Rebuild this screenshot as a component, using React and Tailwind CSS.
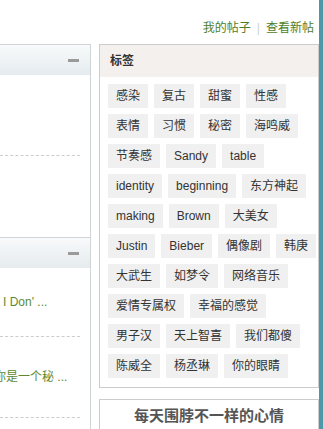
import React from 'react';

const font = { fontFamily: 'Tahoma, "Liberation Sans", "Noto Sans CJK SC", sans-serif' };

const tags = [
  '感染', '复古', '甜蜜', '性感',
  '表情', '习惯', '秘密', '海鸣威',
  '节奏感', 'Sandy', 'table',
  'identity', 'beginning', '东方神起',
  'making', 'Brown', '大美女',
  'Justin', 'Bieber', '偶像剧', '韩庚',
  '大武生', '如梦令', '网络音乐',
  '爱情专属权', '幸福的感觉',
  '男子汉', '天上智喜', '我们都傻',
  '陈威全', '杨丞琳', '你的眼睛',
];

const PanelHead = () => (
  <div className="h-[30px] bg-gradient-to-b from-[#f8fafb] to-[#e5ebee] flex items-center justify-end pr-[11px]">
    <span className="block w-[11px] h-[3px] bg-[#9a9a9a]"></span>
  </div>
);

export default function App() {
  return (
    <div className="w-[323px] h-[429px] bg-white overflow-hidden flex text-[12px]" style={font}>
      <div className="flex-1 flex flex-col">
        {/* top links */}
        <div className="h-[44px] shrink-0 flex items-start justify-end pt-[21px] pr-[5px] text-[#4e7d28] leading-[14px]">
          <span>我的帖子</span>
          <span className="mx-[6px] text-[#d0d0d0]">|</span>
          <span>查看新帖</span>
        </div>

        <div className="flex items-start shrink-0">
          {/* left column, cut off */}
          <div className="w-[91px] shrink-0 overflow-hidden">
            <div className="border-t border-r border-[#cfd4d6]">
              <PanelHead />
              <div className="h-[81px] border-b border-dashed border-[#cccccc] mr-[10px]"></div>
              <div className="h-[81px]"></div>
            </div>
            <div className="border-t border-r border-[#cfd4d6]">
              <PanelHead />
              <div className="h-[69px] border-b border-dashed border-[#cccccc] mr-[10px] flex items-center pl-[3px] text-[#5b8a34] whitespace-nowrap">
                I Don' ...
              </div>
              <div className="h-[81px] border-b border-dashed border-[#cccccc] mr-[10px] flex items-center text-[#5b8a34] whitespace-nowrap">
                <span className="ml-[-6px]">你是一个秘 ...</span>
              </div>
              <div className="h-[20px]"></div>
            </div>
          </div>

          {/* right column */}
          <div className="ml-[8px] w-[220px] shrink-0 flex flex-col">
            <div className="border border-[#cccccc]">
              <div className="h-[32px] bg-[#f3f0ee] flex items-center pl-[10px] font-bold text-[#333333]">标签</div>
              <div className="flex flex-wrap gap-[6px] pl-[8px] pt-[7px] pb-[9px]">
                {tags.map((t) => (
                  <span key={t} className="h-[24px] leading-[24px] px-[8px] bg-[#f0f0f0] text-[#333333] whitespace-nowrap">
                    {t}
                  </span>
                ))}
              </div>
            </div>
            <div className="mt-[11px] border border-[#cccccc] h-[40px] flex justify-center pt-[7px]">
              <span className="text-[15px] font-bold text-[#555555] leading-[18px]">每天围脖不一样的心情</span>
            </div>
          </div>
        </div>
      </div>
      <div className="w-[4px] shrink-0 bg-[#4b98a9]"></div>
    </div>
  );
}
